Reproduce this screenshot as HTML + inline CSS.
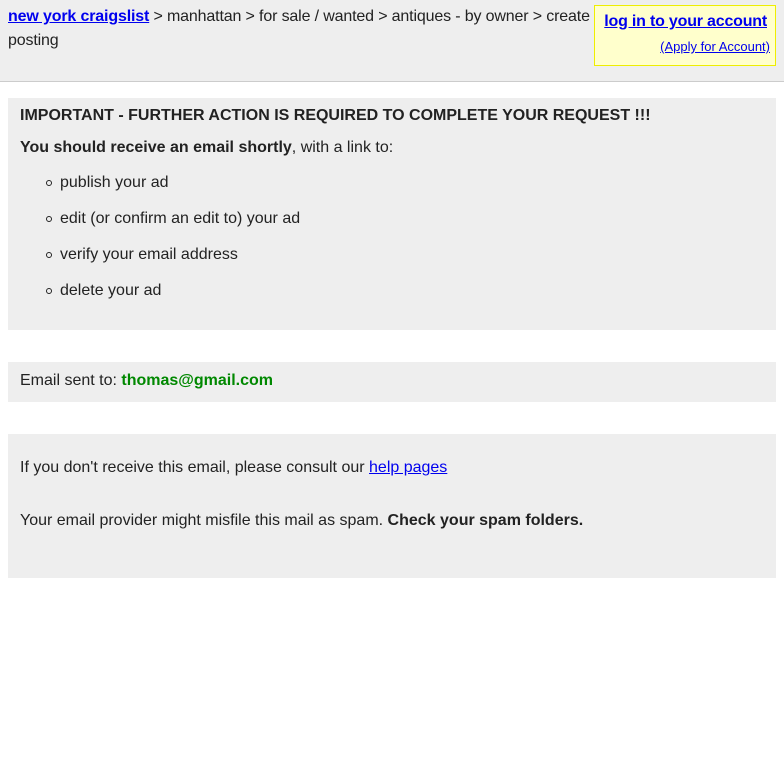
<!DOCTYPE html>
<html><head><meta charset="utf-8"><style>
body{margin:0;font-family:"Liberation Sans",Arial,sans-serif;color:#222;background:#fff;font-size:16px;letter-spacing:0}
a{color:#00e}
.hdr{position:absolute;left:0;top:0;width:784px;height:81px;background:#eee;border-bottom:1px solid #ccc}
.bc{position:absolute;left:8px;top:5px;width:586px;line-height:24px;letter-spacing:-0.15px}
.bc a{font-weight:bold}
.login{position:absolute;left:594px;top:5px;width:180px;height:59px;background:#ffc;border:1px solid #ee0;text-align:right}
.login .a1{position:absolute;right:8px;top:7px;font-weight:bold;font-size:16px;letter-spacing:-0.2px}
.login .a2{position:absolute;right:5px;top:33px;font-size:13px}
.box{position:absolute;left:8px;width:768px;background:#eee}
.b1{top:98px;height:232px}
.b2{top:362px;height:40px}
.b3{top:434px;height:144px}
.t{position:absolute;left:12px;white-space:nowrap}
ul{margin:0;padding:0;list-style:none}
li{position:absolute;left:52px;white-space:nowrap}
li:before{content:"";position:absolute;left:-14px;top:6px;width:4px;height:4px;border:1px solid #222;border-radius:50%}
</style></head><body>
<div class="hdr">
<div class="bc"><a href="#">new york craigslist</a> &gt; manhattan &gt; for sale / wanted &gt; antiques - by owner &gt; create posting</div>
<div class="login"><a class="a1" href="#">log in to your account</a><a class="a2" href="#">(Apply for Account)</a></div>
</div>
<div class="box b1">
<div class="t" style="top:9px;font-weight:bold">IMPORTANT - FURTHER ACTION IS REQUIRED TO COMPLETE YOUR REQUEST !!!</div>
<div class="t" style="top:41px"><b>You should receive an email shortly</b>, with a link to:</div>
<ul>
<li style="top:76px">publish your ad</li>
<li style="top:112px">edit (or confirm an edit to) your ad</li>
<li style="top:148px">verify your email address</li>
<li style="top:184px">delete your ad</li>
</ul>
</div>
<div class="box b2"><div class="t" style="top:10px">Email sent to: <b style="color:#080">thomas@gmail.com</b></div></div>
<div class="box b3">
<div class="t" style="top:25px">If you don't receive this email, please consult our <a href="#">help pages</a></div>
<div class="t" style="top:78px">Your email provider might misfile this mail as spam. <b>Check your spam folders.</b></div>
</div>
</body></html>
